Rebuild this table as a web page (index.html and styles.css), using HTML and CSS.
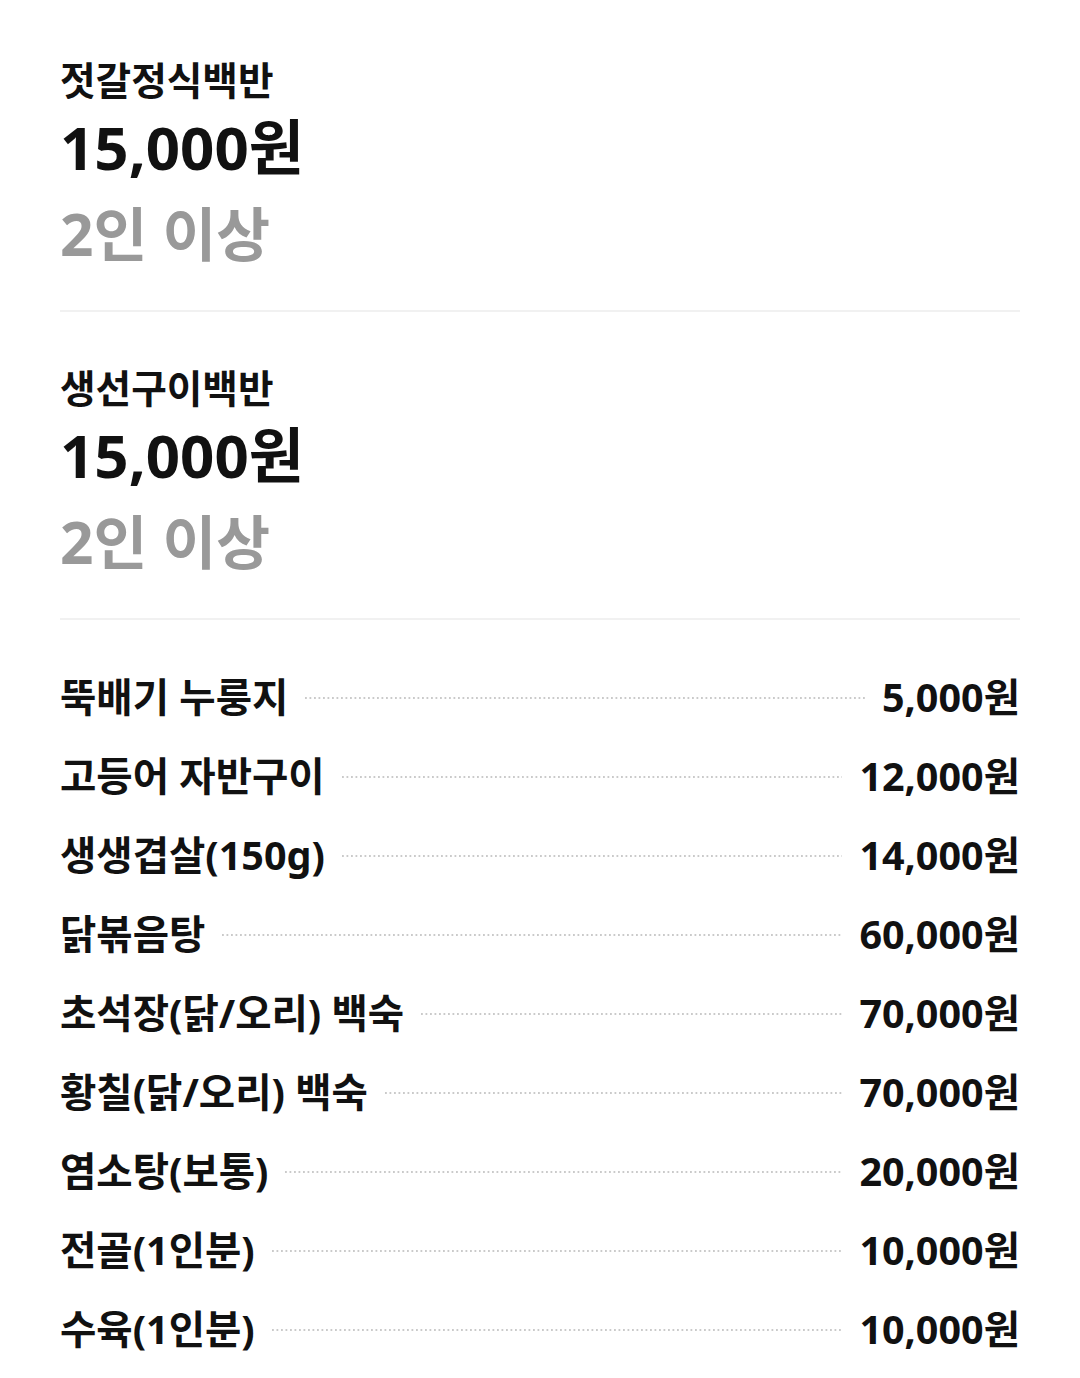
FILE: index.html
```html
<!DOCTYPE html>
<html lang="ko">
<head>
<meta charset="utf-8">
<link rel="stylesheet" href="styles.css">
</head>
<body>
<div class="page">
  <section class="set">
    <div class="set-name">젓갈정식백반</div>
    <div class="set-price">15,000원</div>
    <div class="set-note">2인 이상</div>
  </section>
  <section class="set">
    <div class="set-name">생선구이백반</div>
    <div class="set-price">15,000원</div>
    <div class="set-note">2인 이상</div>
  </section>
  <ul class="menu">
    <li class="row"><span class="name">뚝배기 누룽지</span><span class="leader"></span><span class="price">5,000원</span></li>
    <li class="row"><span class="name">고등어 자반구이</span><span class="leader"></span><span class="price">12,000원</span></li>
    <li class="row"><span class="name">생생겹살(150g)</span><span class="leader"></span><span class="price">14,000원</span></li>
    <li class="row"><span class="name">닭볶음탕</span><span class="leader"></span><span class="price">60,000원</span></li>
    <li class="row"><span class="name">초석장(닭/오리) 백숙</span><span class="leader"></span><span class="price">70,000원</span></li>
    <li class="row"><span class="name">황칠(닭/오리) 백숙</span><span class="leader"></span><span class="price">70,000원</span></li>
    <li class="row"><span class="name">염소탕(보통)</span><span class="leader"></span><span class="price">20,000원</span></li>
    <li class="row"><span class="name">전골(1인분)</span><span class="leader"></span><span class="price">10,000원</span></li>
    <li class="row"><span class="name">수육(1인분)</span><span class="leader"></span><span class="price">10,000원</span></li>
  </ul>
</div>
</body>
</html>
```
FILE: styles.css
```css
* { box-sizing: border-box; }
html, body { margin: 0; padding: 0; background: #fff; }
body {
  font-family: "Noto Sans", "Noto Sans CJK KR", sans-serif;
  color: #111;
}
.page { padding: 0 60px; }
.set {
  padding: 53px 0 37px;
  border-bottom: 2px solid #f1f1f1;
}
.set + .set { padding-top: 49px; }
.set-name {
  font-size: 38.7px;
  font-weight: 700;
  line-height: 54px;
}
.set-price {
  margin-top: 2px;
  font-size: 60px;
  font-weight: 700;
  line-height: 76px;
}
.set-note {
  margin-top: 8px;
  font-size: 58.5px;
  font-weight: 700;
  line-height: 80px;
  color: #999;
}
.menu {
  list-style: none;
  margin: 0;
  padding: 35px 0 0;
}
.row {
  display: flex;
  align-items: center;
  height: 79px;
  font-size: 39.5px;
  font-weight: 700;
}
.leader {
  flex: 1;
  height: 2px;
  margin: 6px 17px 0;
  background-image: linear-gradient(to right, #cacaca 50%, transparent 50%);
  background-size: 4.5px 2px;
  background-repeat: repeat-x;
}
.price { white-space: nowrap; }
```
